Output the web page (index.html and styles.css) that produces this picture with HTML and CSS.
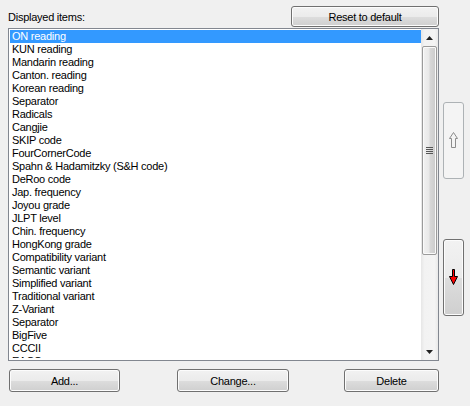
FILE: index.html
```html
<!DOCTYPE html>
<html>
<head>
<meta charset="utf-8">
<link rel="stylesheet" href="styles.css">
</head>
<body>
<div class="window">
  <div class="header">
    <span class="label">Displayed items:</span>
    <button class="btn reset">Reset to default</button>
  </div>
  <div class="listbox">
    <ul class="items">
      <li class="selected">ON reading</li>
      <li>KUN reading</li>
      <li>Mandarin reading</li>
      <li>Canton. reading</li>
      <li>Korean reading</li>
      <li>Separator</li>
      <li>Radicals</li>
      <li>Cangjie</li>
      <li>SKIP code</li>
      <li>FourCornerCode</li>
      <li>Spahn &amp; Hadamitzky (S&amp;H code)</li>
      <li>DeRoo code</li>
      <li>Jap. frequency</li>
      <li>Joyou grade</li>
      <li>JLPT level</li>
      <li>Chin. frequency</li>
      <li>HongKong grade</li>
      <li>Compatibility variant</li>
      <li>Semantic variant</li>
      <li>Simplified variant</li>
      <li>Traditional variant</li>
      <li>Z-Variant</li>
      <li>Separator</li>
      <li>BigFive</li>
      <li>CCCII</li>
      <li class="partial">EACC</li>
    </ul>
    <div class="scrollbar">
      <div class="sb-arrow">
        <svg width="7" height="4" viewBox="0 0 7 4"><polygon points="3.5,0 7,4 0,4" fill="#222"/></svg>
      </div>
      <div class="sb-track">
        <div class="sb-thumb">
          <div class="grip"><i></i><i></i><i></i><i></i></div>
        </div>
      </div>
      <div class="sb-arrow">
        <svg width="7" height="4" viewBox="0 0 7 4"><polygon points="0,0 7,0 3.5,4" fill="#222"/></svg>
      </div>
    </div>
  </div>
  <div class="side">
    <button class="btn move up" disabled>
      <svg width="10" height="17" viewBox="0 0 10 17"><polygon points="4.5,0.5 8.5,6.5 6.5,6.5 6.5,15.5 2.5,15.5 2.5,6.5 0.5,6.5" fill="#f4f4f4" stroke="#8c8c8c"/></svg>
    </button>
    <button class="btn move down">
      <svg width="10" height="17" viewBox="0 0 10 17"><polygon points="3.5,0.5 5.5,0.5 5.5,7.5 8.5,7.5 4.5,15.5 0.5,7.5 3.5,7.5" fill="#ff0000" stroke="#000"/></svg>
    </button>
  </div>
  <div class="footer">
    <button class="btn add">Add...</button>
    <button class="btn change">Change...</button>
    <button class="btn delete">Delete</button>
  </div>
</div>
</body>
</html>
```
FILE: styles.css
```css
html, body {
  margin: 0;
  padding: 0;
  background: #f0f0f0;
}
body {
  font-family: "Liberation Sans", Arial, sans-serif;
  font-size: 11px;
  letter-spacing: -0.25px;
  color: #000;
}
.window {
  width: 470px;
  height: 406px;
  box-sizing: border-box;
  padding: 6px 0 0 8px;
  display: grid;
  grid-template-columns: 431px 21px;
  grid-template-rows: 22px 333px auto;
  column-gap: 4px;
}
.header {
  display: flex;
  justify-content: space-between;
  align-items: flex-start;
}
.label {
  padding-top: 5px;
  line-height: 13px;
}
.btn {
  font-family: "Liberation Sans", Arial, sans-serif;
  font-size: 11px;
  letter-spacing: -0.25px;
  color: #000;
  border: 1px solid #707070;
  border-radius: 3px;
  background: linear-gradient(to bottom, #f2f2f2 0%, #ebebeb 50%, #dddddd 51%, #cfcfcf 100%);
  box-shadow: inset 0 0 0 1px #fcfcfc;
  padding: 0;
  margin: 0;
  display: flex;
  align-items: center;
  justify-content: center;
}
.reset {
  width: 148px;
  height: 21px;
}
.listbox {
  grid-column: 1;
  border: 1px solid #828790;
  background: #fff;
  display: flex;
  overflow: hidden;
}
.items {
  list-style: none;
  margin: 0;
  padding: 1px 0 0 1px;
  flex: 1;
  overflow: hidden;
}
.items li {
  height: 13px;
  line-height: 13px;
  padding-left: 2px;
  white-space: nowrap;
}
.items li.partial {
  height: 3px;
  overflow: hidden;
}
.items li.selected {
  background: #3399ff;
  color: #fff;
}
.scrollbar {
  width: 17px;
  display: flex;
  flex-direction: column;
  background: linear-gradient(to right, #e6e6e6 0%, #f2f2f2 20%, #f4f4f4 80%, #e9e9e9 100%);
}
.sb-arrow {
  height: 17px;
  display: flex;
  align-items: center;
  justify-content: center;
}
.sb-track {
  flex: 1;
  display: flex;
  flex-direction: column;
}
.sb-thumb {
  height: 207px;
  margin: 0 1px;
  border: 1px solid #9a9a9a;
  border-radius: 2px;
  background: linear-gradient(to right, #f1f1f1 0%, #e8e8e8 45%, #d7d7d7 55%, #cbcbcb 100%);
  box-shadow: inset 0 0 0 1px #fafafa;
  display: flex;
  align-items: center;
  justify-content: center;
}
.grip {
  display: flex;
  flex-direction: column;
  gap: 1px;
}
.grip i {
  display: block;
  width: 7px;
  height: 1px;
  background: #555;
}
.side {
  grid-column: 2;
  grid-row: 2;
  display: flex;
  flex-direction: column;
  padding-top: 74px;
  gap: 60px;
}
.move {
  width: 21px;
  height: 77px;
}
.move.up {
  background: #f4f4f4;
  border-color: #adb2b5;
  box-shadow: none;
}
.footer {
  grid-column: 1 / span 2;
  display: flex;
  padding-top: 8px;
}
.footer .btn {
  height: 23px;
}
.add {
  width: 111px;
  margin-left: 1px;
}
.change {
  width: 112px;
  margin-left: 57px;
}
.delete {
  width: 95px;
  margin-left: 55px;
}
```
